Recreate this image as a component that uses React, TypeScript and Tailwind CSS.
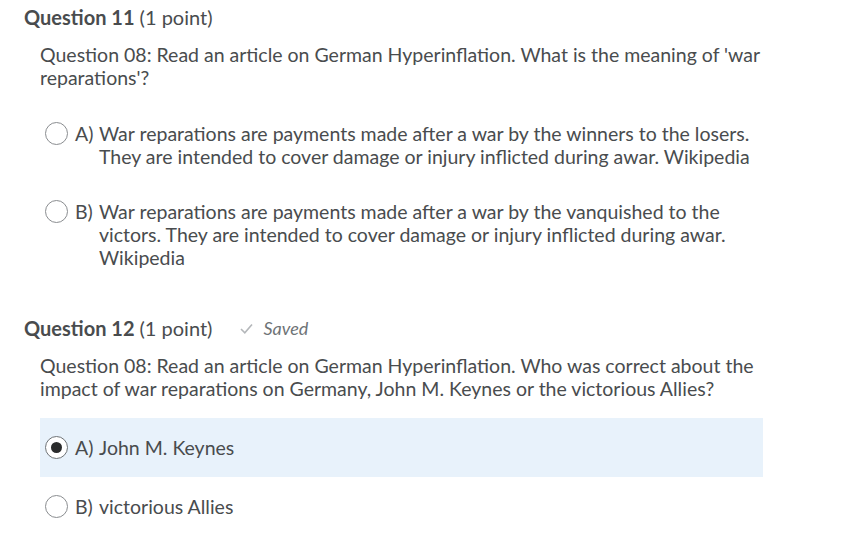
import React from 'react';

const Radio = ({ checked = false }: { checked?: boolean }) => (
  <span className={`flex h-[23px] w-[23px] shrink-0 items-center justify-center rounded-full border bg-white ${checked ? 'border-[#6e7376]' : 'border-[#8a8d90]'}`}>
    {checked && <span className="h-[11px] w-[11px] rounded-full bg-[#2a2b2c]" />}
  </span>
);

const Option = ({ label, text, checked = false, pad = 'py-[16px]' }: { label: string; text: string; checked?: boolean; pad?: string }) => (
  <div className={`flex items-start pl-[5px] pr-3 ${pad} ${checked ? 'bg-[#e8f2fb]' : ''}`}>
    <Radio checked={checked} />
    <div className="flex pl-[7px]">
      <span className="w-[24px] shrink-0">{label}</span>
      <span>{text}</span>
    </div>
  </div>
);

const App = () => {
  return (
    <div className="min-h-screen bg-white text-[19.5px] leading-[23px] text-[#494c4e]" style={{ fontFamily: 'Lato, "Open Sans", sans-serif' }}>
      <div className="pl-[24px] pt-[6px]">
        {/* Question 11 */}
        <h2 className="text-[20px]">
          <span className="font-bold">Question 11</span> (1 point)
        </h2>
        <div className="w-[739px] pl-[16px]">
          <p className="mt-[14px]">
            Question 08: Read an article on German Hyperinflation. What is the meaning of 'war reparations'?
          </p>
          <div className="mt-[17px]">
            <Option label="A)" text="War reparations are payments made after a war by the winners to the losers. They are intended to cover damage or injury inflicted during awar. Wikipedia" />
            <Option label="B)" text="War reparations are payments made after a war by the vanquished to the victors. They are intended to cover damage or injury inflicted during awar. Wikipedia" />
          </div>
        </div>

        {/* Question 12 */}
        <h2 className="mt-[32px] flex items-center text-[20px]">
          <span className="font-bold">Question 12</span>
          <span className="ml-[5px]">(1 point)</span>
          <span className="ml-[27px] flex items-center text-[18px] italic text-[#6e7376]">
            <svg width="15" height="15" viewBox="0 0 15 15" className="mr-[9px]">
              <path d="M2 8 L5.8 11.8 L13 3.5" fill="none" stroke="#b4b7ba" strokeWidth="1.6" />
            </svg>
            Saved
          </span>
        </h2>
        <div className="w-[739px] pl-[16px]">
          <p className="mt-[14px]">
            Question 08: Read an article on German Hyperinflation. Who was correct about the impact of war reparations on Germany, John M. Keynes or the victorious Allies?
          </p>
          <div className="mt-[18px]">
            <Option label="A)" text="John M. Keynes" checked pad="py-[18px]" />
            <Option label="B)" text="victorious Allies" pad="py-[18px]" />
          </div>
        </div>
      </div>
    </div>
  );
};

export default App;
